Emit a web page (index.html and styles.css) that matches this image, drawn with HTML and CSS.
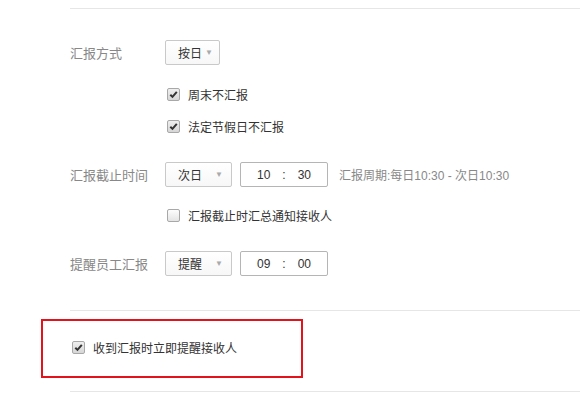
FILE: index.html
```html
<!DOCTYPE html>
<html lang="zh-CN">
<head>
  <meta charset="UTF-8">
  <title>汇报设置</title>
  <link rel="stylesheet" href="styles.css">
</head>
<body>
<div class="panel">
  <div class="rule"></div>

  <div class="form-row row-mode">
    <span class="label">汇报方式</span>
    <div class="select select-short"><span>按日</span><i class="arrow">▼</i></div>
  </div>
  <label class="check row-weekend">
    <span class="box checked"><svg viewBox="0 0 12 12"><path d="M2.5 6.2 L4.9 8.6 L9.6 3.2" /></svg></span>
    周末不汇报
  </label>
  <label class="check row-holiday">
    <span class="box checked"><svg viewBox="0 0 12 12"><path d="M2.5 6.2 L4.9 8.6 L9.6 3.2" /></svg></span>
    法定节假日不汇报
  </label>

  <div class="form-row row-deadline">
    <span class="label">汇报截止时间</span>
    <div class="select"><span>次日</span><i class="arrow">▼</i></div>
    <div class="time"><span>10</span><span>:</span><span>30</span></div>
    <span class="hint">汇报周期:每日10:30 - 次日10:30</span>
  </div>
  <label class="check row-notify">
    <span class="box"></span>
    汇报截止时汇总通知接收人
  </label>

  <div class="form-row row-remind">
    <span class="label">提醒员工汇报</span>
    <div class="select"><span>提醒</span><i class="arrow">▼</i></div>
    <div class="time"><span>09</span><span>:</span><span>00</span></div>
  </div>

  <div class="rule rule-mid"></div>

  <div class="highlight">
    <label class="check">
      <span class="box checked"><svg viewBox="0 0 12 12"><path d="M2.5 6.2 L4.9 8.6 L9.6 3.2" /></svg></span>
      收到汇报时立即提醒接收人
    </label>
  </div>

  <div class="rule rule-end"></div>
</div>
</body>
</html>
```

FILE: styles.css
```css
body {
  margin: 0;
  background: #fff;
  font-family: "Liberation Sans", "Noto Sans CJK SC", sans-serif;
  font-size: 12px;
  color: #333;
}
.panel {
  padding: 8px 0 0 70px;
}
.rule {
  border-top: 1px solid #e6e6e6;
}

.form-row {
  display: flex;
  align-items: center;
  height: 25px;
  white-space: nowrap;
}
.label {
  width: 95px;
  flex-shrink: 0;
  color: #888;
  font-size: 13px;
}
.row-mode { margin-top: 31px; }
.row-deadline { margin-top: 28px; }
.row-remind { margin-top: 28px; }

.select {
  box-sizing: border-box;
  flex-shrink: 0;
  height: 25px;
  width: 67px;
  display: flex;
  align-items: center;
  justify-content: space-between;
  padding: 0 8px 0 12px;
  border: 1px solid #c9c9c9;
  border-radius: 2px;
  background: linear-gradient(#fff, #f7f7f7);
  color: #333;
  font-size: 12px;
}
.select-short {
  width: 55px;
  padding: 0 6px 0 12px;
}
.arrow {
  font-style: normal;
  font-size: 8px;
  color: #aaa;
}

.time {
  box-sizing: border-box;
  flex-shrink: 0;
  height: 25px;
  width: 88px;
  margin-left: 8px;
  display: flex;
  align-items: center;
  justify-content: center;
  gap: 12px;
  border: 1px solid #b5b5b5;
  border-radius: 2px;
  font-size: 12px;
  color: #333;
}
.hint {
  margin-left: 11px;
  font-size: 12px;
  color: #888;
}

.check {
  display: flex;
  align-items: center;
  height: 16px;
  margin-left: 97px;
  color: #333;
  font-size: 12px;
  white-space: nowrap;
}
.row-weekend { margin-top: 21px; }
.row-holiday { margin-top: 16px; }
.row-notify { margin-top: 20px; }

.box {
  box-sizing: border-box;
  flex-shrink: 0;
  width: 13px;
  height: 13px;
  margin-right: 8px;
  border: 1px solid #a8a8a8;
  border-radius: 2px;
  background: linear-gradient(#fdfdfd, #e4e4e4);
  display: flex;
}
.box.checked {
  background: linear-gradient(#efefef, #d6d6d6);
}
.box svg {
  width: 11px;
  height: 11px;
}
.box path {
  fill: none;
  stroke: #333;
  stroke-width: 2.2;
}

.rule-mid { margin-top: 34px; }
.highlight {
  box-sizing: border-box;
  width: 262px;
  height: 59px;
  margin: 8px 0 0 -29px;
  border: 2px solid #e3121b;
  display: flex;
  align-items: center;
  padding: 0 0 3px 0;
}
.highlight .check {
  margin-left: 29px;
}
.rule-end { margin-top: 13px; }
```
